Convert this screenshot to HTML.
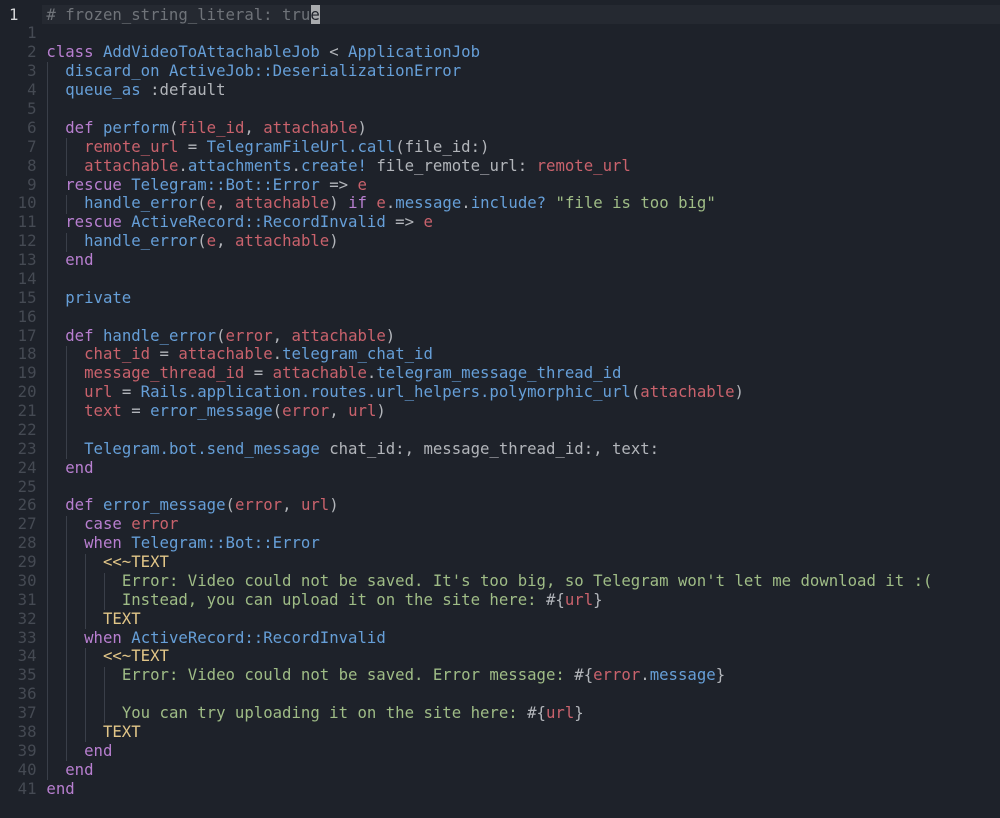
<!DOCTYPE html>
<html lang="en">
<head>
<meta charset="utf-8">
<title>add_video_to_attachable_job.rb</title>
<style>
html,body{margin:0;padding:0;background:#1e222a;width:1000px;height:818px;overflow:hidden}
#e{position:relative;width:1000px;height:818px;font-family:"DejaVu Sans Mono",monospace;font-size:15.67px;color:#b2b5ba;overflow:hidden;filter:blur(.25px)}
.l,.n{position:absolute;height:18.88px;line-height:18.88px;white-space:pre;margin-top:1px}
.l{left:46.4px}
.n{left:0;width:36.5px;text-align:right;color:#454a53}
.g{position:absolute;width:1px;background:#3a3f49}
#cl{position:absolute;left:42px;top:5px;width:958px;height:19px;background:#252931}
#cu{position:absolute;left:310.5px;top:5px;width:9px;height:19px;background:#a9abae}
.k{color:#b87fd0}.c{color:#669fd8}.r{color:#c9626c}.s{color:#9fbc86}.y{color:#e2c688}.m{color:#6f7379}
.cu{color:#1e222a}
</style>
</head>
<body>
<div id="e">
<div id="cl"></div><div id="cu"></div>
<div class="g" style="left:47px;top:62px;height:718px"></div>
<div class="g" style="left:66px;top:138px;height:38px"></div>
<div class="g" style="left:66px;top:195px;height:19px"></div>
<div class="g" style="left:66px;top:233px;height:19px"></div>
<div class="g" style="left:66px;top:346px;height:113px"></div>
<div class="g" style="left:66px;top:516px;height:245px"></div>
<div class="g" style="left:85px;top:554px;height:75px"></div>
<div class="g" style="left:85px;top:648px;height:94px"></div>
<div class="g" style="left:104px;top:573px;height:37px"></div>
<div class="g" style="left:104px;top:667px;height:56px"></div>
<div class="n" style="left:9px;width:auto;top:4.6px;color:#d4d5d7">1</div>
<div class="l" style="top:4.6px"><span class="m"># frozen_string_literal: tru</span><span class="cu">e</span></div>
<div class="n" style="top:23.4px">1</div>
<div class="n" style="top:42.3px">2</div><div class="l" style="top:42.3px"><span class="k">class</span> <span class="c">AddVideoToAttachableJob</span> &lt; <span class="c">ApplicationJob</span></div>
<div class="n" style="top:61.2px">3</div><div class="l" style="top:61.2px">  <span class="c">discard_on</span> <span class="c">ActiveJob::DeserializationError</span></div>
<div class="n" style="top:80.1px">4</div><div class="l" style="top:80.1px">  <span class="c">queue_as</span> :default</div>
<div class="n" style="top:99px">5</div>
<div class="n" style="top:117.8px">6</div><div class="l" style="top:117.8px">  <span class="k">def</span> <span class="c">perform</span>(<span class="r">file_id</span>, <span class="r">attachable</span>)</div>
<div class="n" style="top:136.7px">7</div><div class="l" style="top:136.7px">    <span class="r">remote_url</span> = <span class="c">TelegramFileUrl.call</span>(file_id:)</div>
<div class="n" style="top:155.6px">8</div><div class="l" style="top:155.6px">    <span class="r">attachable</span>.<span class="c">attachments</span>.<span class="c">create!</span> file_remote_url: <span class="r">remote_url</span></div>
<div class="n" style="top:174.5px">9</div><div class="l" style="top:174.5px">  <span class="k">rescue</span> <span class="c">Telegram::Bot::Error</span> =&gt; <span class="r">e</span></div>
<div class="n" style="top:193.3px">10</div><div class="l" style="top:193.3px">    <span class="c">handle_error</span>(<span class="r">e</span>, <span class="r">attachable</span>) <span class="k">if</span> <span class="r">e</span>.<span class="c">message</span>.<span class="c">include?</span> <span class="s">"file is too big"</span></div>
<div class="n" style="top:212.2px">11</div><div class="l" style="top:212.2px">  <span class="k">rescue</span> <span class="c">ActiveRecord::RecordInvalid</span> =&gt; <span class="r">e</span></div>
<div class="n" style="top:231.1px">12</div><div class="l" style="top:231.1px">    <span class="c">handle_error</span>(<span class="r">e</span>, <span class="r">attachable</span>)</div>
<div class="n" style="top:250px">13</div><div class="l" style="top:250px">  <span class="k">end</span></div>
<div class="n" style="top:268.9px">14</div>
<div class="n" style="top:287.7px">15</div><div class="l" style="top:287.7px">  <span class="c">private</span></div>
<div class="n" style="top:306.6px">16</div>
<div class="n" style="top:325.5px">17</div><div class="l" style="top:325.5px">  <span class="k">def</span> <span class="c">handle_error</span>(<span class="r">error</span>, <span class="r">attachable</span>)</div>
<div class="n" style="top:344.4px">18</div><div class="l" style="top:344.4px">    <span class="r">chat_id</span> = <span class="r">attachable</span>.<span class="c">telegram_chat_id</span></div>
<div class="n" style="top:363.2px">19</div><div class="l" style="top:363.2px">    <span class="r">message_thread_id</span> = <span class="r">attachable</span>.<span class="c">telegram_message_thread_id</span></div>
<div class="n" style="top:382.1px">20</div><div class="l" style="top:382.1px">    <span class="r">url</span> = <span class="c">Rails.application.routes.url_helpers.polymorphic_url</span>(<span class="r">attachable</span>)</div>
<div class="n" style="top:401px">21</div><div class="l" style="top:401px">    <span class="r">text</span> = <span class="c">error_message</span>(<span class="r">error</span>, <span class="r">url</span>)</div>
<div class="n" style="top:419.9px">22</div>
<div class="n" style="top:438.8px">23</div><div class="l" style="top:438.8px">    <span class="c">Telegram.bot.send_message</span> chat_id:, message_thread_id:, text:</div>
<div class="n" style="top:457.6px">24</div><div class="l" style="top:457.6px">  <span class="k">end</span></div>
<div class="n" style="top:476.5px">25</div>
<div class="n" style="top:495.4px">26</div><div class="l" style="top:495.4px">  <span class="k">def</span> <span class="c">error_message</span>(<span class="r">error</span>, <span class="r">url</span>)</div>
<div class="n" style="top:514.3px">27</div><div class="l" style="top:514.3px">    <span class="k">case</span> <span class="r">error</span></div>
<div class="n" style="top:533.1px">28</div><div class="l" style="top:533.1px">    <span class="k">when</span> <span class="c">Telegram::Bot::Error</span></div>
<div class="n" style="top:552px">29</div><div class="l" style="top:552px">      <span class="y">&lt;&lt;~TEXT</span></div>
<div class="n" style="top:570.9px">30</div><div class="l" style="top:570.9px">        <span class="s">Error: Video could not be saved. It's too big, so Telegram won't let me download it :(</span></div>
<div class="n" style="top:589.8px">31</div><div class="l" style="top:589.8px">        <span class="s">Instead, you can upload it on the site here: </span>#{<span class="r">url</span>}</div>
<div class="n" style="top:608.6px">32</div><div class="l" style="top:608.6px">      <span class="y">TEXT</span></div>
<div class="n" style="top:627.5px">33</div><div class="l" style="top:627.5px">    <span class="k">when</span> <span class="c">ActiveRecord::RecordInvalid</span></div>
<div class="n" style="top:646.4px">34</div><div class="l" style="top:646.4px">      <span class="y">&lt;&lt;~TEXT</span></div>
<div class="n" style="top:665.3px">35</div><div class="l" style="top:665.3px">        <span class="s">Error: Video could not be saved. Error message: </span>#{<span class="r">error</span>.<span class="c">message</span>}</div>
<div class="n" style="top:684.2px">36</div>
<div class="n" style="top:703px">37</div><div class="l" style="top:703px">        <span class="s">You can try uploading it on the site here: </span>#{<span class="r">url</span>}</div>
<div class="n" style="top:721.9px">38</div><div class="l" style="top:721.9px">      <span class="y">TEXT</span></div>
<div class="n" style="top:740.8px">39</div><div class="l" style="top:740.8px">    <span class="k">end</span></div>
<div class="n" style="top:759.7px">40</div><div class="l" style="top:759.7px">  <span class="k">end</span></div>
<div class="n" style="top:778.6px">41</div><div class="l" style="top:778.6px"><span class="k">end</span></div>
</div>
</body>
</html>
